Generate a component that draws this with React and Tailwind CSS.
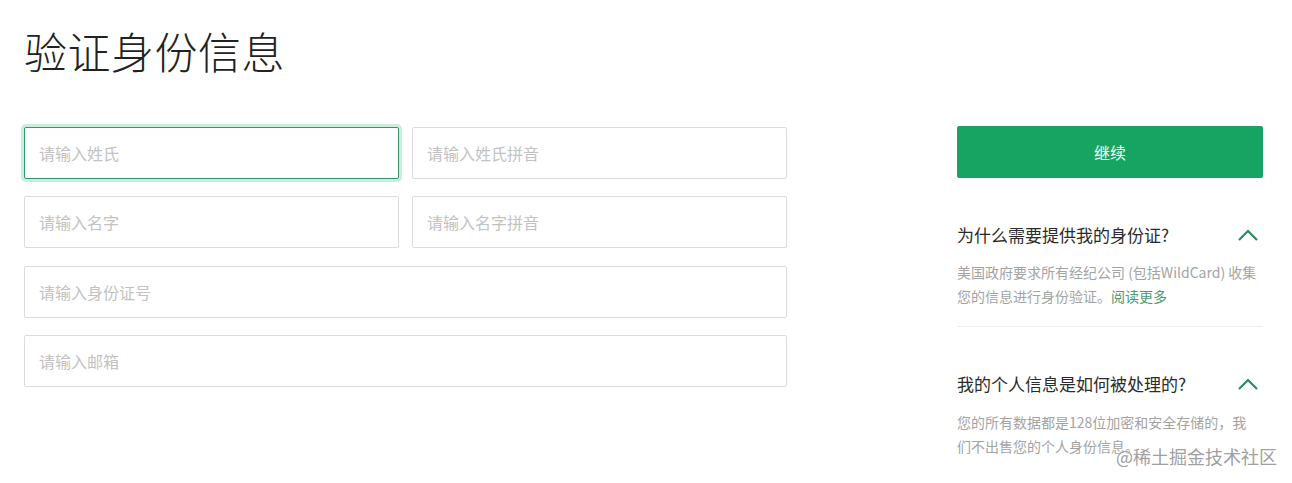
import React from "react";

const font = { fontFamily: '"Noto Sans CJK SC", "Noto Sans", sans-serif' };

function Field({ placeholder, focused }) {
  return (
    <input
      placeholder={placeholder}
      className={
        "h-[52px] w-full rounded-[2px] bg-white pl-[14px] text-[16px] text-[#333] outline-none placeholder:text-[#c2c2c2] " +
        (focused
          ? "border border-[#2e9a69] shadow-[0_0_0_3px_#c8efdb]"
          : "border border-[#dcdcdc]")
      }
      style={font}
    />
  );
}

function Chevron() {
  return (
    <svg width="20" height="12" viewBox="0 0 20 12" fill="none">
      <polyline points="1,11 10,2 19,11" stroke="#2a8c60" strokeWidth="2.2" strokeLinejoin="miter" />
    </svg>
  );
}

export default function App() {
  return (
    <div className="relative h-[483px] w-[1292px] overflow-hidden bg-white" style={font}>
      <div className="pl-[24px] pr-[29px]">
        <h1 className="pt-[26px] text-[43px] font-light leading-[48px] tracking-[0.5px] text-[#222]">
          验证身份信息
        </h1>
        <div className="mt-[52px] flex items-start justify-between">
          <div className="mt-[1px] grid w-[763px] grid-cols-2 gap-x-[13px] gap-y-[17px]">
            <Field placeholder="请输入姓氏" focused />
            <Field placeholder="请输入姓氏拼音" />
            <Field placeholder="请输入名字" />
            <Field placeholder="请输入名字拼音" />
            <div className="col-span-2 mt-[1px]">
              <Field placeholder="请输入身份证号" />
            </div>
            <div className="col-span-2">
              <Field placeholder="请输入邮箱" />
            </div>
          </div>
          <div className="w-[306px]">
            <button className="flex h-[52px] w-full items-center justify-center rounded-[2px] bg-[#17a462] text-[16px] text-white">
              继续
            </button>
            <div className="mt-[45px] flex h-[24px] items-center justify-between pr-[5px]">
              <span className="text-[17px] text-[#2b2b2b]">为什么需要提供我的身份证?</span>
              <Chevron />
            </div>
            <p className="mt-[13px] whitespace-nowrap text-[14px] leading-[24px] text-[#a3a3a3]">
              美国政府要求所有经纪公司 (包括WildCard) 收集
              <br />
              您的信息进行身份验证。<span className="text-[#4a9a74]">阅读更多</span>
            </p>
            <div className="mt-[18px] h-px bg-[#eeeeee]" />
            <div className="mt-[45px] flex h-[24px] items-center justify-between pr-[5px]">
              <span className="text-[17px] text-[#2b2b2b]">我的个人信息是如何被处理的?</span>
              <Chevron />
            </div>
            <p className="mt-[14px] whitespace-nowrap text-[14px] leading-[24px] text-[#a3a3a3]">
              您的所有数据都是128位加密和安全存储的，我
              <br />
              们不出售您的个人身份信息。
            </p>
          </div>
        </div>
      </div>
      <div className="absolute left-[1116px] top-[443px] text-[18px] leading-[26px] text-[#a0a0a0] [text-shadow:0_0_3px_#fff]">
        @稀土掘金技术社区
      </div>
    </div>
  );
}
